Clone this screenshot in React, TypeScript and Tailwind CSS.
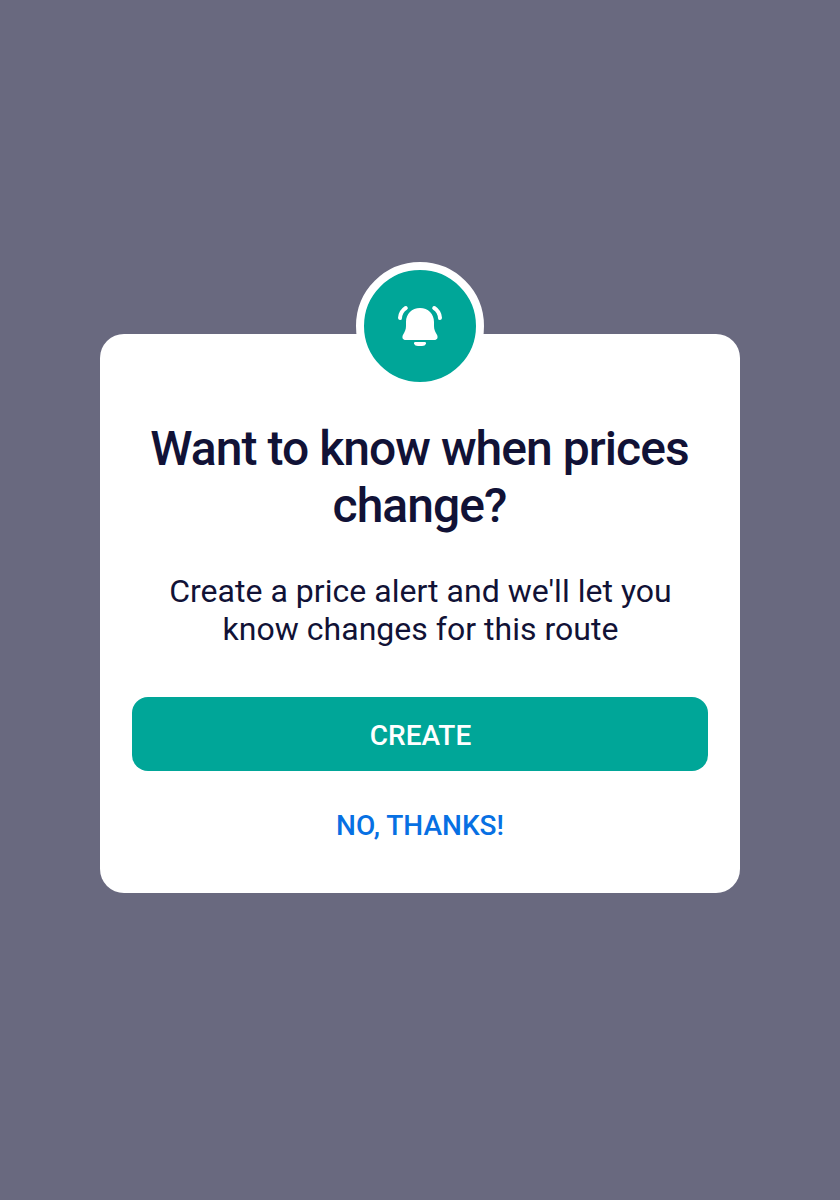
export default function App() {
  return (
    <main className="flex h-[1200px] w-[840px] flex-col items-center bg-[#69697f] pt-[334px] font-['Roboto',sans-serif] text-[#111236]">
      <section className="flex h-[559px] w-[640px] flex-col items-center rounded-[24px] bg-white px-8">
        <div className="-mt-[72px] flex size-32 shrink-0 items-center justify-center rounded-full border-8 border-white bg-[#00a698]">
          <svg className="size-12" viewBox="0 0 48 48" fill="none">
            <path d="M24 6C15.8 6 10 12 10 20V24C10 27.5 8.8 29.8 7.2 32.5C5.5 35.5 6.7 38 9.8 38H38.2C41.3 38 42.5 35.5 40.8 32.5C39.2 29.8 38 27.5 38 24V20C38 12 32.2 6 24 6Z" fill="white" />
            <path d="M19.5 40H28.500C29.600 40 30.200 40.600 30 41.500C29.500 43.200 28 44 26 44H22C20 44 18.500 43.200 18 41.500C17.800 40.600 18.400 40 19.500 40Z" fill="white" />
            <path d="M4 16C4.300 11.600 6.400 8.200 9.800 6M44 16C43.700 11.600 41.600 8.200 38.200 6" stroke="white" strokeWidth="4" strokeLinecap="round" />
          </svg>
        </div>
        <h1 className="mt-[30px] pr-px text-center text-[48px] font-medium leading-[57px] tracking-[-0.96px]">Want to know when prices<br />change?</h1>
        <p className="mt-[38px] pl-px text-center text-[32px] leading-[38px] tracking-[0.02px]">Create a price alert and we'll let you<br />know changes for this route</p>
        <button className="mt-[49px] h-[74px] w-full shrink-0 rounded-[16px] bg-[#00a698] pl-px pt-[3px] text-[28px] font-medium text-white">CREATE</button>
        <button className="mt-[38px] text-[28px] font-medium leading-[34px] text-[#0770e3]">NO, THANKS!</button>
      </section>
    </main>
  );
}
